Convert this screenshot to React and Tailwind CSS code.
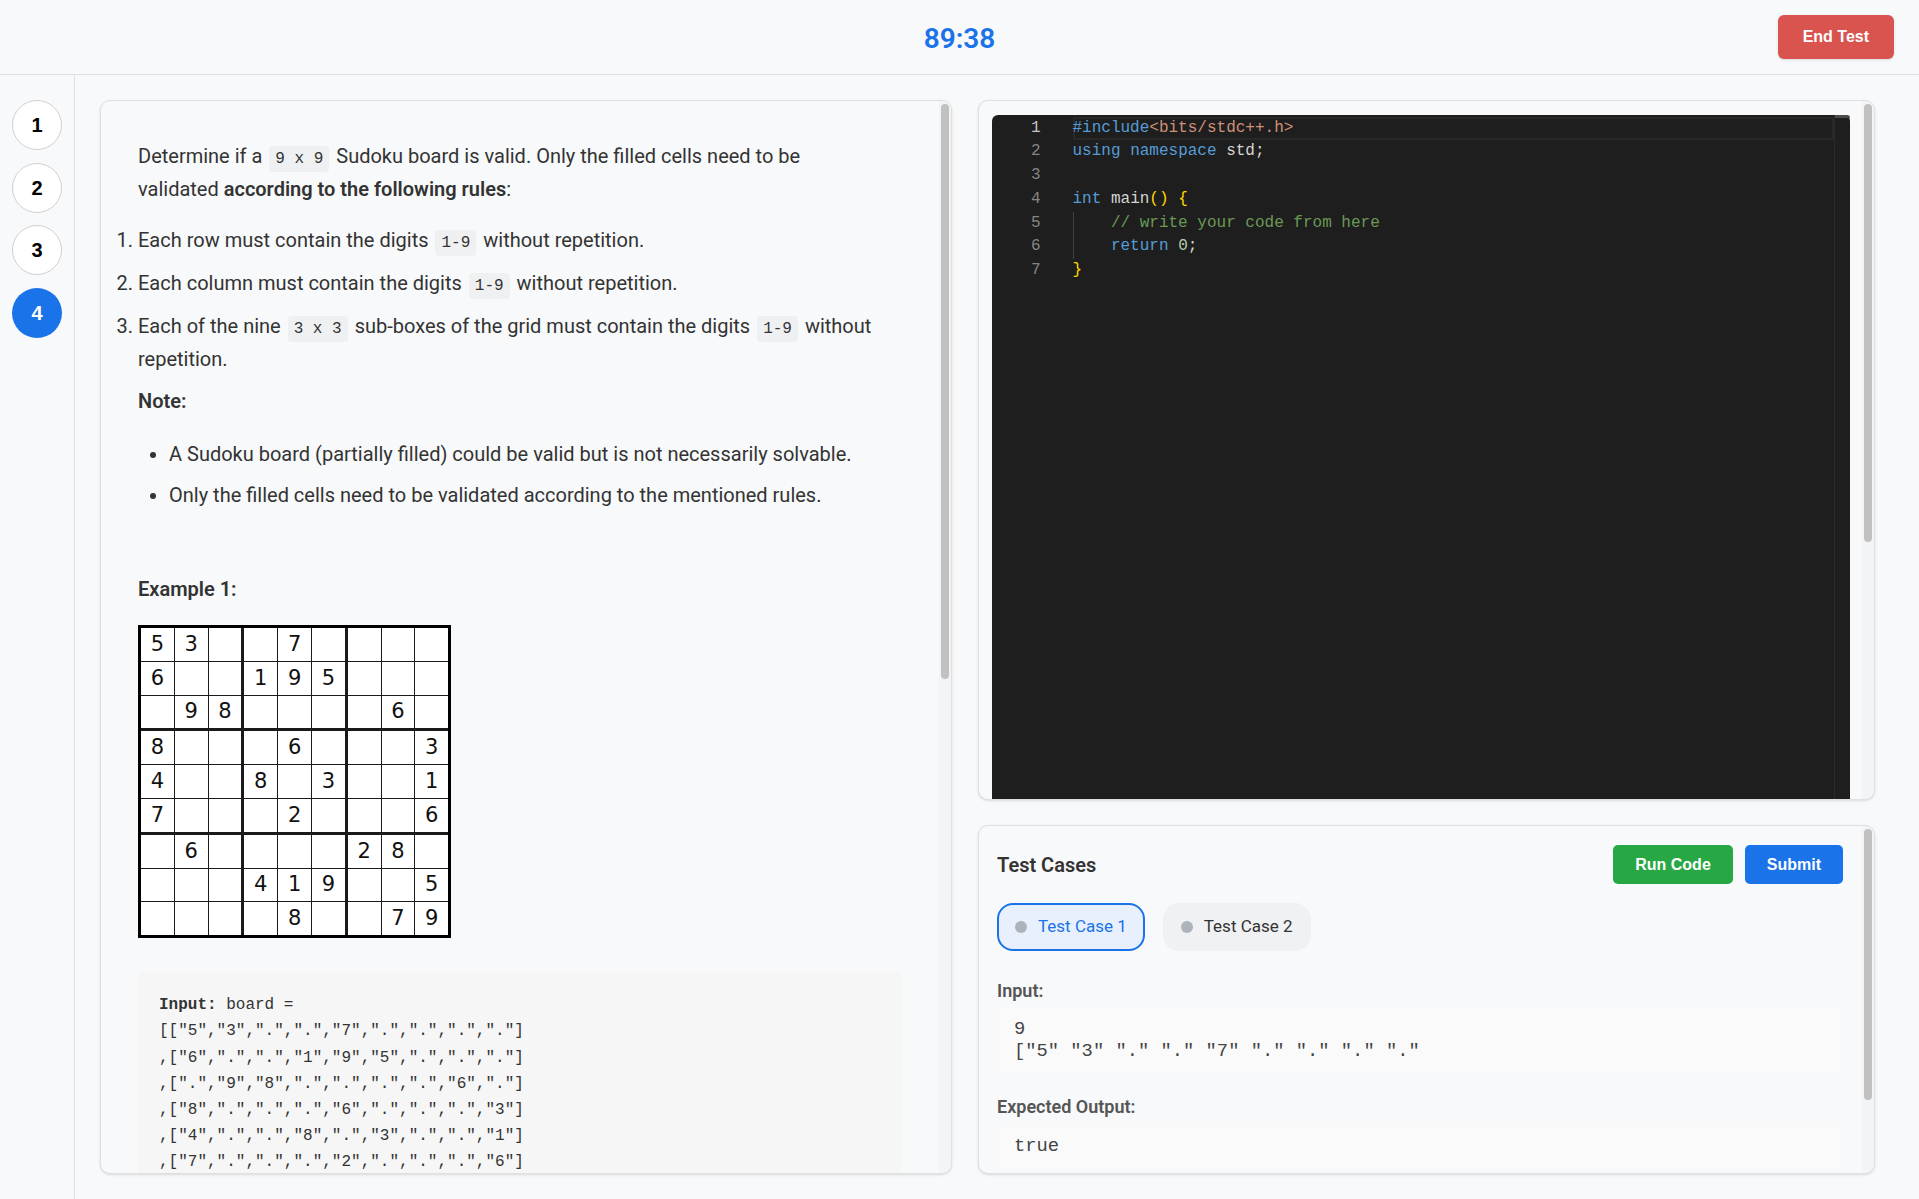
import { useState } from 'react';

const board = [
  ['5', '3', '', '', '7', '', '', '', ''],
  ['6', '', '', '1', '9', '5', '', '', ''],
  ['', '9', '8', '', '', '', '', '6', ''],
  ['8', '', '', '', '6', '', '', '', '3'],
  ['4', '', '', '8', '', '3', '', '', '1'],
  ['7', '', '', '', '2', '', '', '', '6'],
  ['', '6', '', '', '', '', '2', '8', ''],
  ['', '', '', '4', '1', '9', '', '', '5'],
  ['', '', '', '', '8', '', '', '7', '9'],
];

function Code({ children }) {
  return (
    <code className="font-['Liberation_Mono',monospace] text-[16px] leading-none bg-[#eff0f1] rounded-[4px] px-[6px] py-[4px] mx-[2px]">
      {children}
    </code>
  );
}

// thin grey scrollbar drawn over the panel's right edge
function ScrollThumb({ top, height }) {
  return (
    <div className="absolute top-0 bottom-0 right-0 w-[12px] bg-[#f3f4f5]">
      <div className="absolute right-[2px] w-[8px] rounded-full bg-[#c1c1c1]" style={{ top, height }} />
    </div>
  );
}

function Sudoku() {
  return (
    <div className="inline-grid grid-cols-[repeat(9,auto)] border-[3px] border-black bg-white">
      {board.map((row, r) =>
        row.map((v, c) => {
          const right = c === 8 ? '' : c === 2 || c === 5 ? 'border-r-[3px]' : 'border-r';
          const bottom = r === 8 ? '' : r === 2 || r === 5 ? 'border-b-[3px]' : 'border-b';
          return (
            <div
              key={r + '-' + c}
              className={`box-content w-[32.8px] h-[32.8px] flex items-center justify-center border-[#1a1a1a] ${right} ${bottom} font-['DejaVu_Sans',sans-serif] text-[21px] text-[#111]`}
            >
              {v}
            </div>
          );
        })
      )}
    </div>
  );
}

const codeLines = [
  <>
    <span className="text-[#569cd6]">#include</span>
    <span className="text-[#ce9178]">&lt;bits/stdc++.h&gt;</span>
  </>,
  <>
    <span className="text-[#569cd6]">using</span> <span className="text-[#569cd6]">namespace</span>{' '}
    <span className="text-[#d4d4d4]">std;</span>
  </>,
  <></>,
  <>
    <span className="text-[#569cd6]">int</span> <span className="text-[#d4d4d4]">main</span>
    <span className="text-[#ffd700]">()</span> <span className="text-[#ffd700]">{'{'}</span>
  </>,
  <>
    {'    '}
    <span className="text-[#6a9955]">// write your code from here</span>
  </>,
  <>
    {'    '}
    <span className="text-[#569cd6]">return</span> <span className="text-[#b5cea8]">0</span>
    <span className="text-[#d4d4d4]">;</span>
  </>,
  <>
    <span className="text-[#ffd700]">{'}'}</span>
  </>,
];

const inputLines = [
  '[["5","3",".",".","7",".",".",".","."]',
  ',["6",".",".","1","9","5",".",".","."]',
  ',[".","9","8",".",".",".",".","6","."]',
  ',["8",".",".",".","6",".",".",".","3"]',
  ',["4",".",".","8",".","3",".",".","1"]',
  ',["7",".",".",".","2",".",".",".","6"]',
  ',[".","6",".",".",".",".","2","8","."]',
  ',[".",".",".","4","1","9",".",".","5"]',
  ',[".",".",".",".","8",".",".","7","9"]]',
];

export default function App() {
  const [activeQ, setActiveQ] = useState(4);
  const [activeCase, setActiveCase] = useState(1);

  return (
    <div className="h-[1199px] flex flex-col bg-[#f8f9fa] text-[#333] font-['Roboto',sans-serif]">
      {/* Header with timer */}
      <header className="h-[75px] shrink-0 grid grid-cols-3 items-center border-b border-[#e0e0e0] bg-[#f8f9fa]">
        <div />
        <div className="text-center text-[28px] font-semibold text-[#1a73e8] pt-[4px]">89:38</div>
        <div className="flex justify-end pr-[25px]">
          <button
            type="button"
            className="h-[44px] px-[25px] rounded-[6px] bg-[#d9534f] text-white text-[16px] font-bold font-['Liberation_Sans',Arial,sans-serif] shadow-sm"
          >
            End Test
          </button>
        </div>
      </header>

      <div className="flex flex-1 min-h-0">
        {/* Question nav */}
        <nav className="w-[75px] shrink-0 border-r border-[#e0e0e0] flex flex-col items-center pt-[25px] gap-[12.5px]">
          {[1, 2, 3, 4].map((n) => (
            <button
              key={n}
              type="button"
              onClick={() => setActiveQ(n)}
              className={
                n === activeQ
                  ? "w-[50px] h-[50px] rounded-full bg-[#1a73e8] text-white text-[20px] font-bold font-['Liberation_Sans',Arial,sans-serif] flex items-center justify-center"
                  : "w-[50px] h-[50px] rounded-full bg-white border border-[#cfcfcf] text-black text-[20px] font-bold font-['Liberation_Sans',Arial,sans-serif] flex items-center justify-center"
              }
            >
              {n}
            </button>
          ))}
        </nav>

        <main className="flex-1 flex gap-[26px] p-[25px] min-h-0">
          {/* Problem statement */}
          <section className="relative w-[852px] shrink-0 rounded-[10px] border border-[#e0e0e0] bg-[#f8f9fa] shadow-sm overflow-hidden">
            <div className="h-full overflow-hidden pl-[37px] pr-[66px] pt-[39px]">
              <p className="text-[20px] leading-[32.5px]">
                Determine if a <Code>9 x 9</Code> Sudoku board is valid. Only the filled cells need to be validated{' '}
                <strong className="font-semibold">according to the following rules</strong>:
              </p>
              <ol className="list-decimal list-outside mt-[19px] space-y-[10px] text-[20px] leading-[33px]">
                <li>
                  Each row must contain the digits <Code>1-9</Code> without repetition.
                </li>
                <li>
                  Each column must contain the digits <Code>1-9</Code> without repetition.
                </li>
                <li>
                  Each of the nine <Code>3 x 3</Code> sub-boxes of the grid must contain the digits <Code>1-9</Code>{' '}
                  without repetition.
                </li>
              </ol>
              <p className="mt-[9px] text-[20px] leading-[33px] font-semibold">Note:</p>
              <ul className="list-disc list-outside pl-[31px] mt-[20px] space-y-[8px] text-[20px] leading-[33px]">
                <li>A Sudoku board (partially filled) could be valid but is not necessarily solvable.</li>
                <li>Only the filled cells need to be validated according to the mentioned rules.</li>
              </ul>
              <p className="mt-[61px] text-[20px] leading-[33px] font-semibold">Example 1:</p>
              <div className="mt-[19px] leading-none">
                <Sudoku />
              </div>
              <pre className="mt-[34px] -mr-[16px] bg-[#f6f6f7] rounded-[6px] px-[21px] pt-[20px] pb-[18px] font-['Liberation_Mono',monospace] text-[16px] leading-[26.2px] text-[#333] whitespace-pre-wrap">
                <strong>Input:</strong> board ={'\n'}
                {inputLines.join('\n')}
                {'\n'}
                <strong>Output:</strong> true
              </pre>
            </div>
            <ScrollThumb top={3} height={575} />
          </section>

          {/* Editor + test cases */}
          <div className="w-[897px] shrink-0 flex flex-col gap-[25px] min-h-0">
            <section className="relative h-[700px] shrink-0 rounded-[10px] border border-[#e0e0e0] bg-[#f8f9fa] shadow-sm overflow-hidden">
              <div className="h-full overflow-hidden pt-[13.5px] pl-[12.5px] pr-[24px]">
                <div className="h-[1090px] bg-[#1e1e1e] rounded-t-[6px] flex pt-[2px] font-['Liberation_Mono',monospace] text-[16px] leading-[23.8px] whitespace-pre">
                  <div className="w-[49px] shrink-0 text-right text-[#858585]">
                    {codeLines.map((_, i) => (
                      <div key={i} className={i === 0 ? 'text-[#c6c6c6]' : ''}>
                        {i + 1}
                      </div>
                    ))}
                  </div>
                  <div className="flex-1 ml-[32px]">
                    {codeLines.map((line, i) => (
                      <div
                        key={i}
                        className={
                          i === 0
                            ? 'h-[23.8px] shadow-[inset_0_0_0_2px_#282828]'
                            : i === 4 || i === 5
                              ? 'h-[23.8px] shadow-[inset_1px_0_0_#404040]'
                              : 'h-[23.8px]'
                        }
                      >
                        {line}
                      </div>
                    ))}
                  </div>
                  <div className="w-[16px] shrink-0 border-l border-[#2b2b2b] -mt-[2px]">
                    <div className="h-[3px] bg-[#4a4a4a] rounded-tr-[6px]" />
                  </div>
                </div>
              </div>
              <ScrollThumb top={3} height={438} />
            </section>

            <section className="relative flex-1 min-h-0 rounded-[10px] border border-[#e0e0e0] bg-[#f8f9fa] shadow-sm overflow-hidden">
              <div className="h-full overflow-hidden pl-[18px] pr-[31px] pt-[19px]">
                <div className="flex items-center justify-between">
                  <h2 className="text-[20px] font-semibold text-[#333]">Test Cases</h2>
                  <div className="flex gap-[12px] font-['Liberation_Sans',Arial,sans-serif]">
                    <button type="button" className="h-[39px] px-[22px] rounded-[5px] bg-[#28a745] text-white text-[16px] font-bold">
                      Run Code
                    </button>
                    <button type="button" className="h-[39px] px-[22px] rounded-[5px] bg-[#1a73e8] text-white text-[16px] font-bold">
                      Submit
                    </button>
                  </div>
                </div>

                <div className="flex gap-[18px] mt-[19px]">
                  {[1, 2].map((n) => (
                    <button
                      key={n}
                      type="button"
                      onClick={() => setActiveCase(n)}
                      className={
                        n === activeCase
                          ? 'h-[48px] px-[16px] rounded-[16px] border-2 border-[#1a73e8] bg-[#e8f0fe] text-[#1a73e8] text-[17px] flex items-center gap-[11px]'
                          : 'h-[48px] px-[16px] rounded-[16px] border-2 border-transparent bg-[#f0f1f3] text-[#333] text-[17px] flex items-center gap-[11px]'
                      }
                    >
                      <span className="w-[12px] h-[12px] rounded-full bg-[#adb3ba]" />
                      Test Case {n}
                    </button>
                  ))}
                </div>

                <div className="mt-[28px] text-[18px] leading-[24px] font-semibold text-[#555]">Input:</div>
                <div className="mt-[5px] rounded-[6px] bg-[#fafafb] px-[17px] py-[10px] font-['Liberation_Mono',monospace] text-[18.8px] leading-[22px] text-[#444] whitespace-pre">
                  {'9\n["5" "3" "." "." "7" "." "." "." "."'}
                </div>

                <div className="mt-[23px] text-[18px] leading-[24px] font-semibold text-[#555]">Expected Output:</div>
                <div className="mt-[6px] rounded-[6px] bg-[#fafafb] px-[17px] py-[10px] font-['Liberation_Mono',monospace] text-[18.8px] leading-[22px] text-[#444] whitespace-pre">
                  true
                </div>
              </div>
              <ScrollThumb top={3} height={271} />
            </section>
          </div>
        </main>
      </div>
    </div>
  );
}
